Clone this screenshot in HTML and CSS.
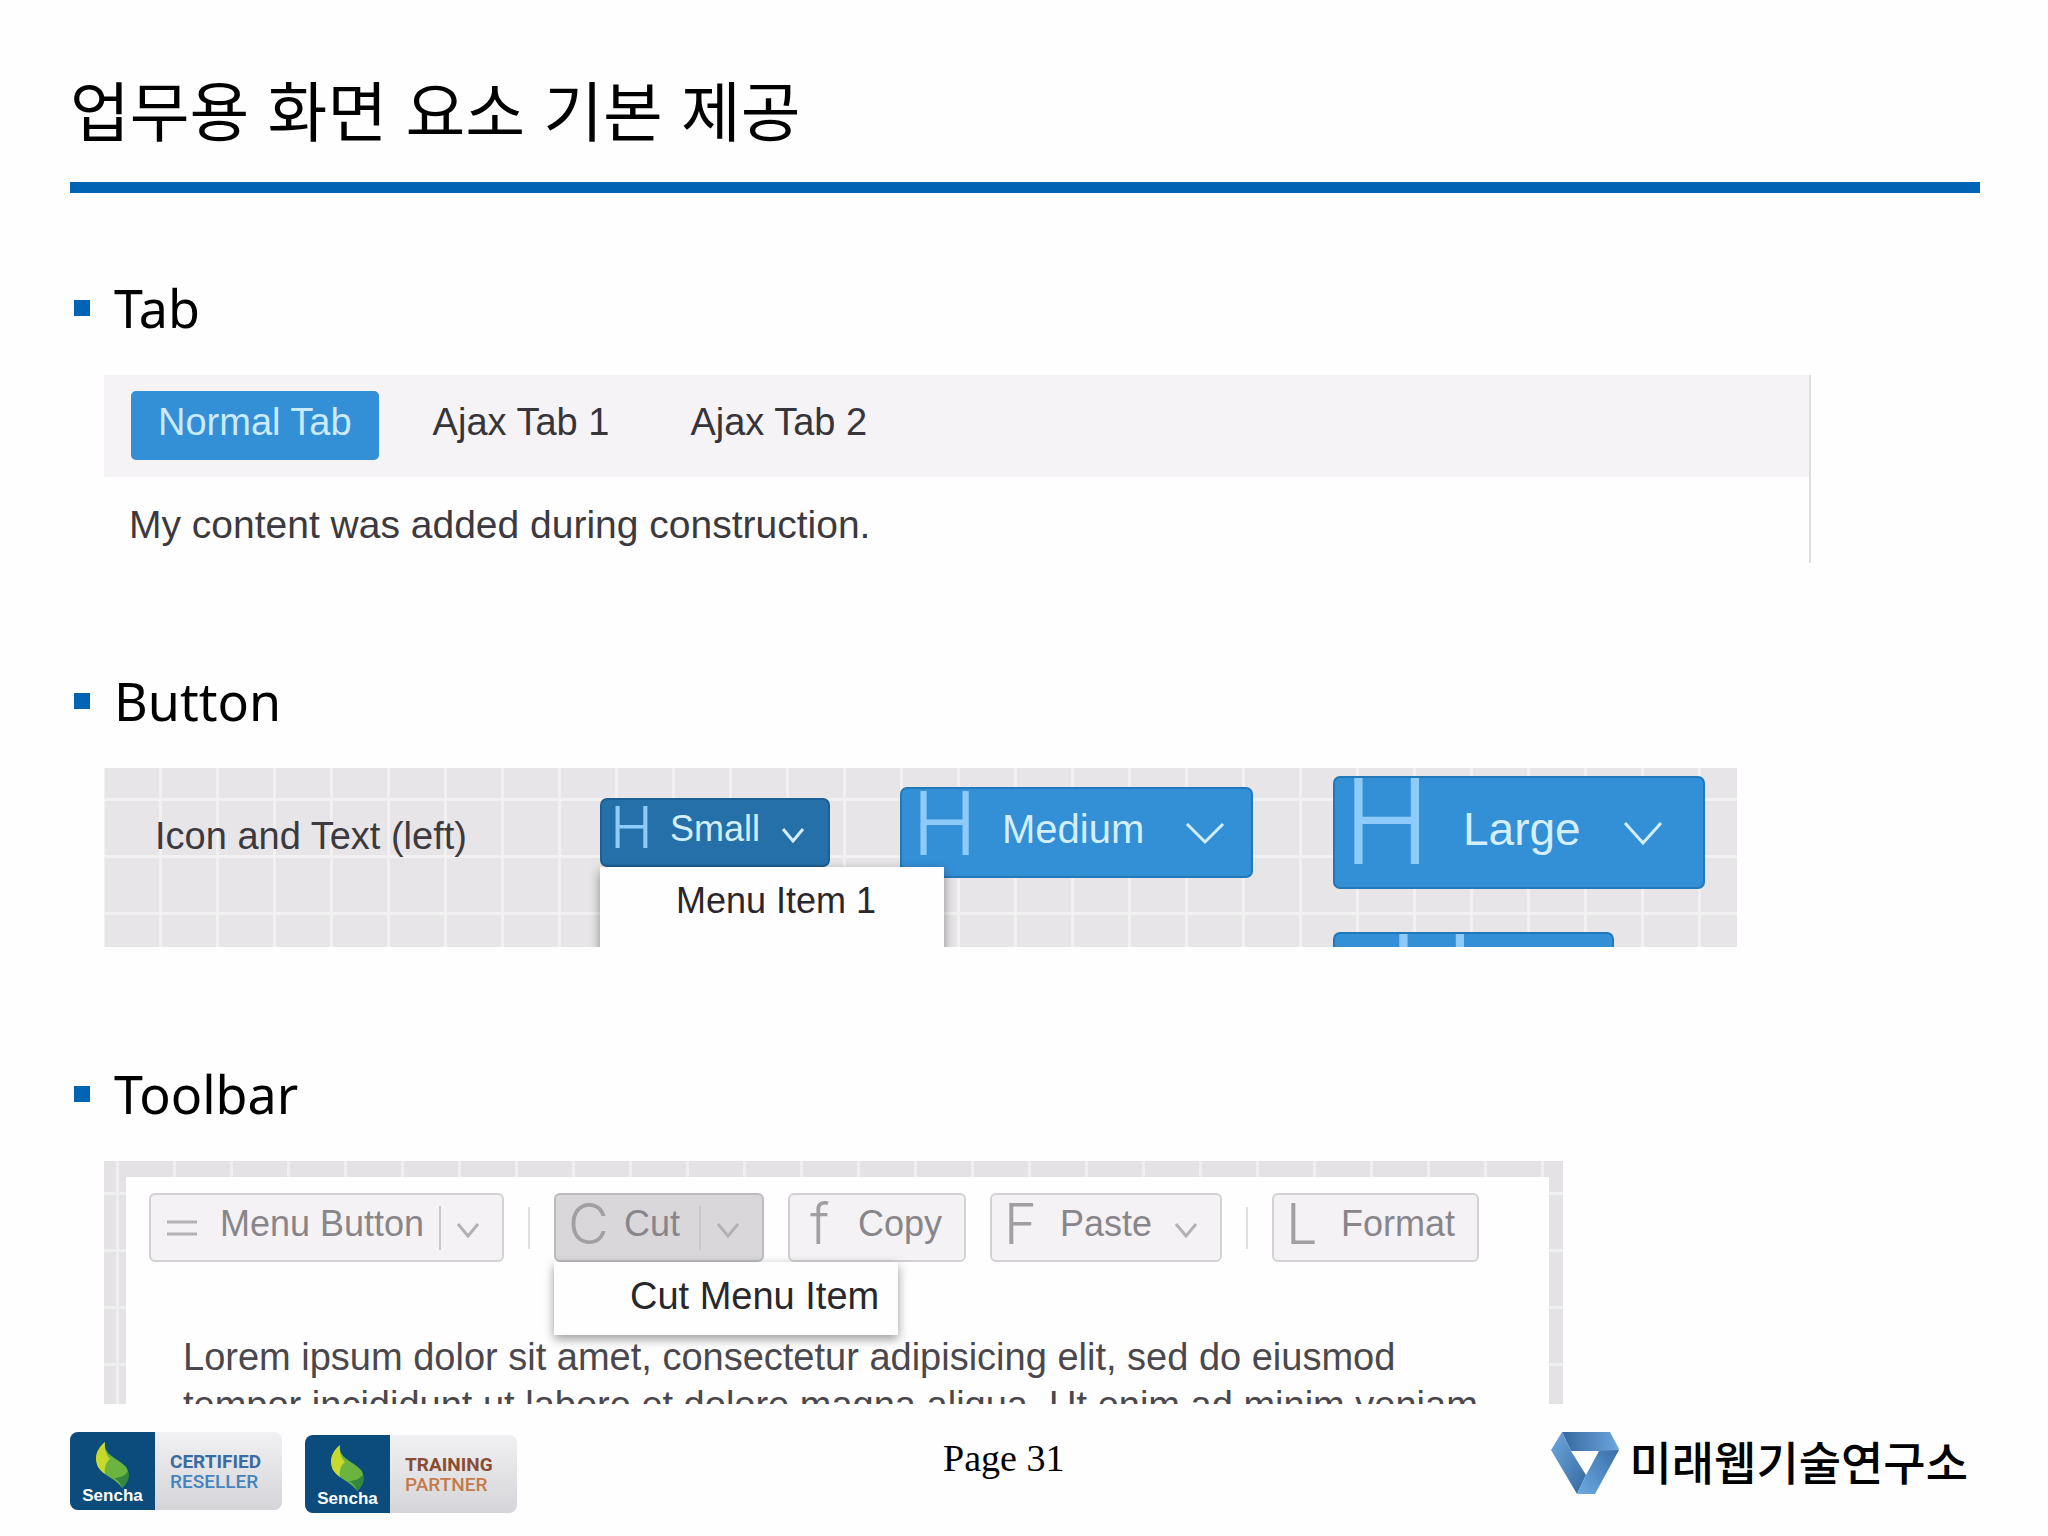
FILE: index.html
```html
<!DOCTYPE html>
<html lang="ko">
<head>
  <meta charset="UTF-8" />
  <meta name="viewport" content="width=device-width, initial-scale=1.0" />
  <title>업무용 화면 요소 기본 제공</title>
  <link rel="stylesheet" href="styles.css">
</head>
<body>
  <header class="slide-header">
    <h1>업무용 화면 요소 기본 제공</h1>
  </header>

  <main>
    <section class="item">
      <h2>Tab</h2>
      <div class="tab-panel">
        <div class="tabs" role="tablist">
          <button type="button" class="tab active" role="tab" aria-selected="true">Normal Tab</button>
          <button type="button" class="tab" role="tab" aria-selected="false">Ajax Tab 1</button>
          <button type="button" class="tab" role="tab" aria-selected="false">Ajax Tab 2</button>
        </div>
        <p class="tab-content">My content was added during construction.</p>
      </div>
    </section>

    <section class="item">
      <h2>Button</h2>
      <div class="button-panel">
        <span class="row-label">Icon and Text (left)</span>
        <div class="cell">
          <button type="button" class="btn small pressed">
            <span class="icon">H</span>Small
            <svg class="arrow" viewBox="0 0 24 16"><path d="M2 2 L12 14 L22 2"/></svg>
          </button>
          <div class="menu">
            <a href="#">Menu Item 1</a>
          </div>
        </div>
        <div class="cell">
          <button type="button" class="btn medium">
            <span class="icon">H</span>Medium
            <svg class="arrow" viewBox="0 0 40 24"><path d="M2 2 L20 20 L38 2"/></svg>
          </button>
        </div>
        <div class="cell">
          <button type="button" class="btn large">
            <span class="icon">H</span>Large
            <svg class="arrow" viewBox="0 0 40 24"><path d="M2 2 L20 22 L38 2"/></svg>
          </button>
        </div>
        <div class="cell next-row">
          <button type="button" class="btn large icon-top" aria-label="Large"><span class="icon">H</span></button>
        </div>
      </div>
    </section>

    <section class="item">
      <h2>Toolbar</h2>
      <div class="toolbar-panel">
        <div class="window">
          <div class="toolbar" role="toolbar">
            <button type="button" class="tool menu-button">
              <svg class="lines" viewBox="0 0 30 18"><path d="M0 3 H30 M0 15 H30"/></svg>Menu Button
              <span class="split"></span>
              <svg class="arrow" viewBox="0 0 24 16"><path d="M2 2 L12 14 L22 2"/></svg>
            </button>
            <span class="separator"></span>
            <div class="cell">
              <button type="button" class="tool cut pressed">
                <span class="icon">C</span>Cut
                <span class="split"></span>
                <svg class="arrow" viewBox="0 0 24 16"><path d="M2 2 L12 14 L22 2"/></svg>
              </button>
              <div class="menu">
                <a href="#">Cut Menu Item</a>
              </div>
            </div>
            <button type="button" class="tool copy"><span class="icon">f</span>Copy</button>
            <button type="button" class="tool paste">
              <span class="icon">F</span>Paste
              <svg class="arrow" viewBox="0 0 24 16"><path d="M2 2 L12 14 L22 2"/></svg>
            </button>
            <span class="separator"></span>
            <button type="button" class="tool format"><span class="icon">L</span>Format</button>
          </div>
          <p class="window-text">Lorem ipsum dolor sit amet, consectetur adipisicing elit, sed do eiusmod<br>tempor incididunt ut labore et dolore magna aliqua. Ut enim ad minim veniam,</p>
        </div>
      </div>
    </section>
  </main>

  <footer>
    <div class="badges">
      <div class="badge reseller">
        <div class="badge-logo">
          <svg class="leaf" viewBox="0 0 34 46">
            <path fill="#6bb43f" d="M9 0 C2 6 -3 16 3 26 C8 34 22 38 26 46 C33 40 34 30 30 25 C24 17 7 14 9 0"/>
            <path fill="#c8d92e" d="M9 0 C2 6 -3 14 2 25 C4 28 6 30 9 32 C8 25 10 20 14 17 C10 13 8 7 9 0"/>
            <path fill="#35873f" d="M18 36 C23 39 25 42 26 46 C32 41 34 35 32 29 C29 34 24 36 18 36"/>
          </svg>
          <span>Sencha</span>
        </div>
        <div class="badge-text"><b>CERTIFIED</b><span>RESELLER</span></div>
      </div>
      <div class="badge partner">
        <div class="badge-logo">
          <svg class="leaf" viewBox="0 0 34 46">
            <path fill="#6bb43f" d="M9 0 C2 6 -3 16 3 26 C8 34 22 38 26 46 C33 40 34 30 30 25 C24 17 7 14 9 0"/>
            <path fill="#c8d92e" d="M9 0 C2 6 -3 14 2 25 C4 28 6 30 9 32 C8 25 10 20 14 17 C10 13 8 7 9 0"/>
            <path fill="#35873f" d="M18 36 C23 39 25 42 26 46 C32 41 34 35 32 29 C29 34 24 36 18 36"/>
          </svg>
          <span>Sencha</span>
        </div>
        <div class="badge-text"><b>TRAINING</b><span>PARTNER</span></div>
      </div>
    </div>
    <span class="page-number">Page 31</span>
    <div class="company">
      <svg viewBox="0 0 68 62">
        <defs>
          <linearGradient id="armLeft" x1="0" y1="0" x2="1" y2="1"><stop offset="0" stop-color="#6fa9de"/><stop offset="1" stop-color="#33689f"/></linearGradient>
          <linearGradient id="armTop" x1="0" y1="0" x2="1" y2="0"><stop offset="0" stop-color="#34689f"/><stop offset="1" stop-color="#6ba6dc"/></linearGradient>
          <linearGradient id="armRight" x1="1" y1="0" x2="0" y2="1"><stop offset="0" stop-color="#386ea8"/><stop offset="1" stop-color="#6eaae2"/></linearGradient>
        </defs>
        <path fill="url(#armTop)" d="M11 0 H59 L68 17 L66 19 H20 Z"/>
        <path fill="url(#armLeft)" d="M11 0 L0 18 L26 62 L35 43 L20 19 Z"/>
        <path fill="url(#armRight)" d="M48 19 L68 18 L44 62 H26 L35 43 Z"/>
      </svg>
      <span>미래웹기술연구소</span>
    </div>
  </footer>
</body>
</html>
```

FILE: styles.css
```css
* {
  box-sizing: border-box;
}
body {
  margin: 0;
  padding: 0 68px 0 70px;
  background: #fefefe;
  color: #000;
  font-family: "Liberation Sans", "Noto Sans CJK KR", sans-serif;
}
h1, h2, p {
  margin: 0;
  font-weight: normal;
}
button {
  font-family: inherit;
  text-align: left;
  cursor: pointer;
}
.slide-header {
  padding: 60px 0 26px;
  border-bottom: 11px solid #0063b4;
}
h1 {
  font-family: "Noto Sans CJK KR", sans-serif;
  font-size: 65px;
  line-height: 96px;
}
main {
  padding-top: 79px;
}
.item {
  height: 393px;
}
.item:last-child {
  height: auto;
}
h2 {
  display: flex;
  align-items: center;
  gap: 24px;
  margin-bottom: 31px;
  padding-left: 4px;
  font-family: "Noto Sans", sans-serif;
  font-size: 52px;
  line-height: 72px;
}
h2::before {
  content: "";
  width: 16px;
  height: 16px;
  background: #0063b4;
}

/* Tab */
.tab-panel {
  max-width: 1707px;
  height: 188px;
  margin-left: 34px;
  border-right: 2px solid #dfdde0;
}
.tabs {
  display: flex;
  gap: 27px;
  height: 102px;
  padding: 16px 27px;
  background: #f5f3f6;
}
.tab {
  height: 69px;
  padding: 0 27px 6px;
  border: none;
  border-radius: 5px;
  background: none;
  color: #37353a;
  font-size: 38px;
}
.tab.active {
  background: #338fd6;
  color: #c9eaff;
}
.tab-content {
  padding: 24px 25px;
  color: #3c3a3e;
  font-size: 39px;
  line-height: 48px;
}

/* Button */
.button-panel {
  display: grid;
  grid-template-columns: 445px 300px 433px 1fr;
  grid-template-rows: 128px 120px;
  row-gap: 32px;
  align-items: center;
  max-width: 1633px;
  height: 179px;
  margin-left: 34px;
  padding-left: 51px;
  overflow: hidden;
  background-color: #e7e5e7;
  background-image:
    linear-gradient(#f2f1f2 3px, transparent 3px),
    linear-gradient(90deg, #f2f1f2 3px, transparent 3px);
  background-size: 57px 57px;
  background-position: 55px 30px;
}
.row-label {
  padding-top: 8px;
  color: #3c3a3e;
  font-size: 38px;
}
.cell {
  position: relative;
}
.btn {
  display: flex;
  align-items: center;
  border: 2px solid #2378b9;
  border-radius: 7px;
  background: #338fd6;
  color: #d3eeff;
}
.icon {
  font-family: Inter, sans-serif;
  font-weight: 300;
  color: #8ecbfa;
}
.arrow {
  fill: none;
  stroke: currentColor;
  stroke-width: 3;
}
.btn.small {
  width: 230px;
  height: 69px;
  padding: 0 23px 6px 8px;
  font-size: 36px;
}
.btn.pressed {
  border-color: #1d5f93;
  background: #2670a9;
}
.small .icon {
  width: 60px;
  margin-bottom: 4px;
  font-size: 58px;
  line-height: 56px;
}
.small .arrow {
  width: 24px;
  margin: 12px 0 0 auto;
}
.btn.medium {
  width: 353px;
  height: 91px;
  padding: 0 26px 6px 10px;
  font-size: 40px;
}
.medium .icon {
  width: 90px;
  margin-bottom: 12px;
  font-size: 88px;
  line-height: 80px;
}
.medium .arrow {
  width: 40px;
  margin: 10px 0 0 auto;
}
.btn.large {
  width: 372px;
  height: 113px;
  padding: 0 40px 6px 8px;
  font-size: 46px;
}
.large .icon {
  width: 120px;
  margin-bottom: 16px;
  font-size: 118px;
  line-height: 88px;
}
.large .arrow {
  width: 40px;
  margin: 8px 0 0 auto;
}
.next-row {
  grid-column: 4;
}
.btn.icon-top {
  width: 281px;
  padding-left: 53px;
}
.menu {
  position: absolute;
  top: 100%;
  left: 0;
  z-index: 1;
  width: 344px;
  padding: 10px 0 15px;
  background: #fefefe;
  box-shadow: 0 4px 10px rgba(0, 0, 0, 0.4);
}
.menu a {
  display: block;
  padding-left: 76px;
  color: #29272b;
  font-size: 38px;
  line-height: 48px;
  text-decoration: none;
}
.button-panel .menu {
  padding-bottom: 60px;
}
.button-panel .menu a {
  font-size: 36px;
}

/* Toolbar */
.toolbar-panel {
  max-width: 1459px;
  height: 243px;
  margin-left: 34px;
  padding: 16px 14px 0 22px;
  overflow: hidden;
  background-color: #e4e2e5;
  background-image:
    linear-gradient(#efeef0 3px, transparent 3px),
    linear-gradient(90deg, #efeef0 3px, transparent 3px);
  background-size: 57px 57px;
  background-position: 12px 31px;
}
.window {
  height: 300px;
  padding: 16px 23px;
  background: #fefefe;
}
.toolbar {
  display: flex;
  align-items: center;
  gap: 24px;
}
.tool {
  display: flex;
  align-items: center;
  height: 69px;
  padding: 0 22px 8px 12px;
  border: 2px solid #d3d1d4;
  border-radius: 6px;
  background: #f4f2f5;
  color: #88868a;
  font-size: 36px;
}
.tool.pressed {
  border-color: #bcbabd;
  background: #d9d7da;
}
.tool .icon {
  width: 56px;
  color: #a19fa2;
  font-size: 56px;
  line-height: 60px;
}
.tool .arrow {
  width: 24px;
  margin-top: 12px;
  stroke: #b3b1b4;
}
.split {
  width: 2px;
  height: 44px;
  margin: 8px 15px 0 auto;
  background: #c9c7ca;
}
.lines {
  width: 30px;
  margin: 8px 23px 0 4px;
  fill: none;
  stroke: #b3b1b4;
  stroke-width: 3;
}
.menu-button {
  width: 355px;
}
.cut {
  width: 210px;
}
.copy {
  width: 178px;
}
.tool.copy .icon {
  padding-left: 8px;
}
.paste {
  width: 232px;
}
.paste .arrow {
  margin-left: auto;
}
.format {
  width: 207px;
}
.separator {
  width: 2px;
  height: 42px;
  background: #e0dee1;
}
.window-text {
  padding: 71px 0 0 34px;
  color: #4a484c;
  font-size: 38px;
  line-height: 48px;
  white-space: nowrap;
}

footer {
  display: grid;
  grid-template-columns: 46% auto 1fr;
  align-items: start;
  padding: 28px 12px 0 0;
}
.badges {
  display: flex;
  gap: 23px;
}
.badge {
  display: flex;
  width: 212px;
  height: 78px;
  border-radius: 8px;
  overflow: hidden;
  background: linear-gradient(#f1f1f3, #d5d5d9);
}
.partner {
  margin-top: 3px;
}
.badge-logo {
  display: flex;
  flex-direction: column;
  align-items: center;
  width: 85px;
  padding-top: 10px;
  background: #0b4c7c;
  color: #fff;
  font-size: 17px;
  font-weight: bold;
  line-height: 20px;
}
.leaf {
  width: 34px;
  height: 46px;
  margin-bottom: -2px;
}
.badge-text {
  display: flex;
  flex-direction: column;
  padding: 20px 0 0 15px;
  font-family: Roboto, sans-serif;
  font-size: 19px;
  line-height: 20px;
}
.badge-text span {
  font-weight: 500;
}
.reseller b {
  color: #3a6c9f;
}
.reseller .badge-text span {
  color: #4384bd;
}
.partner b {
  color: #8a4d34;
}
.partner .badge-text span {
  color: #c47a4b;
}
.page-number {
  font-family: "Liberation Serif", serif;
  font-size: 38px;
  line-height: 52px;
}
.company {
  display: flex;
  align-items: flex-start;
  justify-content: flex-end;
  gap: 10px;
  font-family: "Noto Sans CJK KR", sans-serif;
  font-size: 46px;
  font-weight: 500;
  line-height: 56px;
}
.company svg {
  width: 68px;
  height: 62px;
}
```
